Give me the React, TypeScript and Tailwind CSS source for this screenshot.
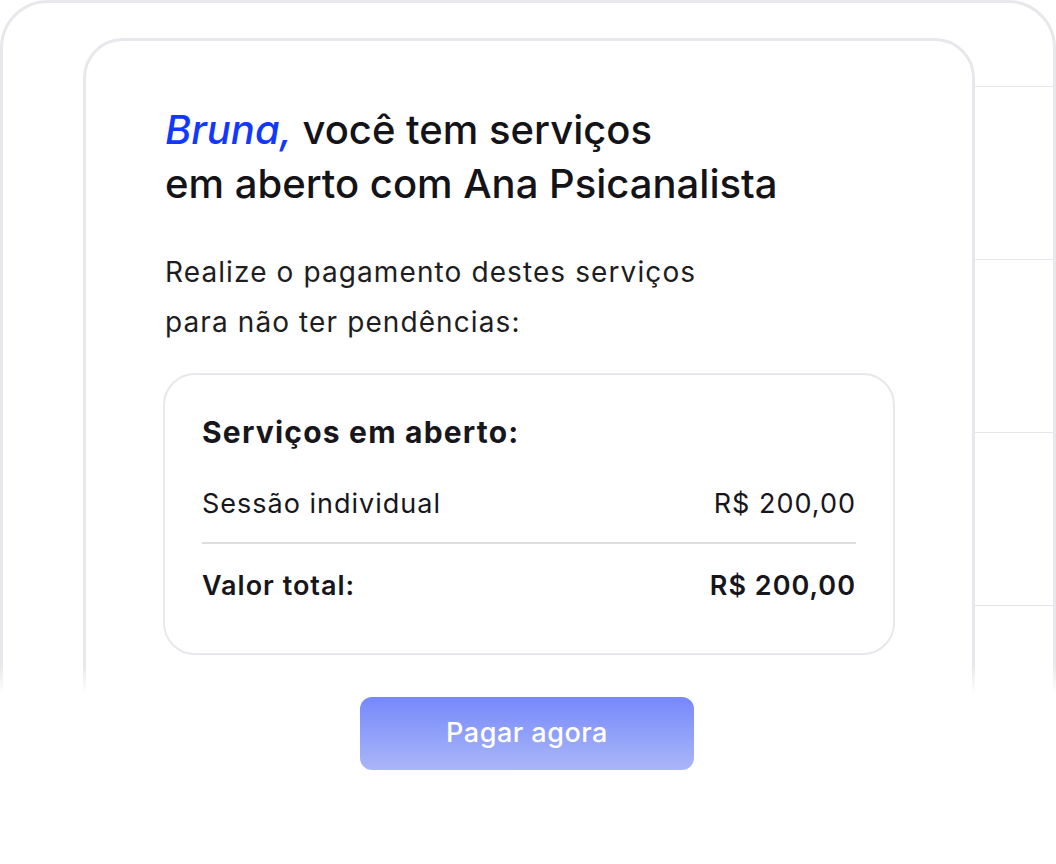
const rows = [0, 1, 2, 3, 4];

function ServiceRow({ label, value, strong }: { label: string; value: string; strong?: boolean }) {
  return (
    <div
      className={
        "flex items-center justify-between text-[27px] leading-[36px] tracking-[1px] text-[#16161c] " +
        (strong ? "font-semibold" : "font-normal")
      }
    >
      <span>{label}</span>
      <span>{value}</span>
    </div>
  );
}

export default function App() {
  return (
    <div
      className="relative h-[864px] w-[1056px] overflow-hidden bg-white"
      style={{ fontFamily: "Inter, 'Noto Sans', sans-serif" }}
    >
      {/* background panel */}
      <div className="flex h-[1000px] rounded-[48px] border-[3px] border-[#e8e8ec]">
        {/* card */}
        <div className="ml-[80px] mt-[35px] flex w-[892px] flex-col rounded-[40px] border-[3px] border-[#e8e8ec] bg-white px-[77px]">
          <h1 className="pl-[2px] pt-[62px] text-[40px] font-medium leading-[54px] text-[#131318]">
            <span className="italic text-[#1238ff]">Bruna,</span> você tem serviços
            <br />
            em aberto com Ana Psicanalista
          </h1>

          <p className="mt-[36px] pl-[2px] text-[28px] leading-[50px] tracking-[1.1px] text-[#1d1d22]">
            Realize o pagamento destes serviços
            <br />
            para não ter pendências:
          </p>

          <div className="mt-[26px] rounded-[32px] border-2 border-[#e8e8ec] px-[37px] pb-[49px] pt-[39px]">
            <h2 className="text-[30px] font-bold leading-[36px] tracking-[1.2px] text-[#16161c]">Serviços em aberto:</h2>
            <div className="mt-[36px]">
              <ServiceRow label="Sessão individual" value="R$ 200,00" />
            </div>
            <div className="mt-[20px] h-[2px] bg-[#dededf]" />
            <div className="mt-[24px]">
              <ServiceRow label="Valor total:" value="R$ 200,00" strong />
            </div>
          </div>

          <div className="relative z-10 mt-[42px] flex justify-center pr-[4px]">
            <button className="h-[73px] w-[334px] rounded-[12px] bg-gradient-to-b from-[#7688fb] to-[#abb6f7] text-[27px] font-medium tracking-[0.5px] text-white">
              Pagar agora
            </button>
          </div>
        </div>

        {/* table rows behind the card */}
        <div className="flex flex-1 flex-col">
          <div className="h-[84px] border-b border-[#e6e6e8]" />
          {rows.map((r) => (
            <div key={r} className="h-[173px] border-b border-[#e6e6e8]" />
          ))}
        </div>
      </div>

      {/* fade out */}
      <div className="absolute inset-x-0 bottom-0 top-[664px] bg-[linear-gradient(to_bottom,rgba(255,255,255,0)_0px,#ffffff_30px)]" />
    </div>
  );
}
